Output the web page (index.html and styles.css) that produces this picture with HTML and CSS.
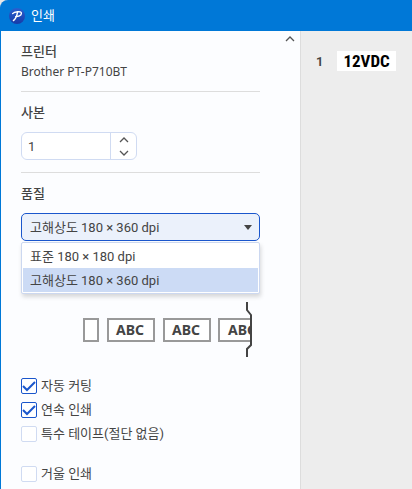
FILE: index.html
```html
<!DOCTYPE html>
<html lang="ko">
<head>
    <meta charset="UTF-8">
    <meta name="viewport" content="width=device-width, initial-scale=1.0">
    <title>인쇄</title>
    <link rel="stylesheet" href="styles.css">
</head>
<body>

<div class="window">
    <header class="titlebar">
        <svg class="logo" width="16" height="16" viewBox="0 0 16 16" aria-hidden="true">
            <defs>
                <linearGradient id="logo-fill" x1="0" y1="0" x2="0" y2="1">
                    <stop offset="0" stop-color="#2a5fd0"/>
                    <stop offset="1" stop-color="#163aa8"/>
                </linearGradient>
            </defs>
            <circle cx="8" cy="8" r="8" fill="url(#logo-fill)"/>
            <path d="M3.6 5.6C5.2 3.8 12.4 2.6 12.4 5.2C12.4 7.6 9 8.8 6.6 8.6M8.4 4.8C7.8 8 6.4 11 4.4 12.6" fill="none" stroke="#fff" stroke-width="1.4" stroke-linecap="round"/>
        </svg>
        <h1>인쇄</h1>
    </header>

    <div class="content">
        <main class="settings">
            <button class="collapse" type="button" aria-label="접기">
                <svg width="10" height="6" viewBox="0 0 10 6"><path d="M1 5L5 1L9 5" fill="none" stroke="#555" stroke-width="1.3"/></svg>
            </button>

            <section class="group">
                <h2>프린터</h2>
                <p>Brother PT-P710BT</p>
            </section>

            <section class="group copies">
                <h2><label for="copies">사본</label></h2>
                <div class="spinner">
                    <input type="text" id="copies" value="1" inputmode="numeric">
                    <div class="spinner-buttons">
                        <button type="button" aria-label="늘리기">
                            <svg width="10" height="6" viewBox="0 0 10 6"><path d="M1 5L5 1L9 5" fill="none" stroke="#555" stroke-width="1.3"/></svg>
                        </button>
                        <button type="button" aria-label="줄이기">
                            <svg width="10" height="6" viewBox="0 0 10 6"><path d="M1 1L5 5L9 1" fill="none" stroke="#555" stroke-width="1.3"/></svg>
                        </button>
                    </div>
                </div>
            </section>

            <section class="group">
                <h2><label for="quality">품질</label></h2>
                <div class="dropdown">
                    <select id="quality">
                        <option>표준 180 × 180 dpi</option>
                        <option selected>고해상도 180 × 360 dpi</option>
                    </select>
                    <svg class="arrow" width="8" height="5" viewBox="0 0 8 5" aria-hidden="true"><path d="M0 0H8L4 5Z" fill="#444"/></svg>
                    <ul class="menu">
                        <li>표준 180 × 180 dpi</li>
                        <li class="active">고해상도 180 × 360 dpi</li>
                    </ul>
                </div>

                <svg class="tape" width="239" height="56" viewBox="0 0 239 56" aria-hidden="true">
                    <defs>
                        <clipPath id="cut"><rect x="0" y="0" width="230" height="56"/></clipPath>
                    </defs>
                    <g clip-path="url(#cut)">
                        <g fill="#fff" stroke="#999" stroke-width="2">
                            <rect x="63" y="17" width="14" height="22"/>
                            <rect x="87" y="17" width="46" height="22"/>
                            <rect x="143" y="17" width="46" height="22"/>
                            <rect x="198" y="17" width="46" height="22"/>
                        </g>
                        <g class="tape-text">
                            <text x="95" y="33">ABC</text>
                            <text x="151" y="33">ABC</text>
                            <text x="207" y="33">ABC</text>
                        </g>
                    </g>
                    <path d="M226 0V8L230 13V43L226 47V55" fill="none" stroke="#444" stroke-width="2"/>
                </svg>

                <div class="options">
                    <label><input type="checkbox" checked>자동 커팅</label>
                    <label><input type="checkbox" checked>연속 인쇄</label>
                    <label><input type="checkbox">특수 테이프(절단 없음)</label>
                    <label class="mirror"><input type="checkbox">거울 인쇄</label>
                </div>
            </section>
        </main>

        <aside class="preview">
            <span class="page">1</span>
            <span class="label">12VDC</span>
        </aside>
    </div>
</div>

</body>
</html>
```
FILE: styles.css
```css
* {
    box-sizing: border-box;
}
body {
    margin: 0;
    background-color: #e8e8e8;
    color: #444;
    font-family: Roboto, "Noto Sans CJK KR", sans-serif;
    font-size: 13px;
    line-height: 20px;
}
h1, h2, p, ul {
    margin: 0;
    padding: 0;
}
button {
    display: flex;
    padding: 0;
    border: none;
    background: none;
    cursor: pointer;
}
.window {
    display: flex;
    flex-direction: column;
    height: 100vh;
    overflow: hidden;
    border-left: 1px solid #0078d7;
    border-top-left-radius: 8px;
    background-color: #0078d7;
}
.titlebar {
    display: flex;
    align-items: center;
    gap: 6px;
    height: 31px;
    flex-shrink: 0;
    padding-left: 8px;
}
.titlebar h1 {
    color: #fff;
    font-size: 13px;
    font-weight: normal;
}
.content {
    display: flex;
    flex: 1;
    min-height: 0;
}
.settings {
    position: relative;
    flex: 0 0 300px;
    overflow: hidden;
    padding: 0 40px 0 20px;
    border-right: 1px solid #ddd;
    background-color: #fcfdff;
}
.collapse {
    position: absolute;
    top: 5px;
    right: 5px;
}
.group {
    padding: 11px 0 9px;
}
.group + .group {
    border-top: 1px solid #ddd;
}
.group h2 {
    font-size: 13px;
    font-weight: 500;
}
.group p {
    font-family: "Noto Sans", sans-serif;
    font-size: 12px;
}
.group.copies {
    padding-bottom: 12px;
}
.spinner {
    display: flex;
    width: 116px;
    height: 28px;
    margin-top: 9px;
    overflow: hidden;
    border: 1px solid #d0dbf2;
    border-radius: 6px;
    background-color: #fff;
}
.spinner input {
    flex: 1;
    min-width: 0;
    padding: 1px 6px 0;
    border: none;
    border-right: 1px solid #d0dbf2;
    outline: none;
    background: none;
    color: #444;
    font: inherit;
}
.spinner-buttons {
    display: flex;
    flex-direction: column;
    width: 25px;
}
.spinner-buttons button {
    flex: 1;
    align-items: center;
    justify-content: center;
}
.dropdown {
    position: relative;
    margin-top: 9px;
}
.dropdown select {
    display: block;
    width: 100%;
    height: 28px;
    padding: 2px 24px 0 8px;
    appearance: none;
    border: 1px solid #1a56cc;
    border-radius: 5px;
    outline: none;
    background-color: #ebf1fb;
    color: #444;
    font: inherit;
}
.arrow {
    position: absolute;
    top: 12px;
    right: 8px;
    pointer-events: none;
}
.menu {
    position: absolute;
    top: 29px;
    left: 0;
    right: 0;
    padding: 1px;
    border: 1px solid #ccd8f0;
    border-radius: 2px;
    background-color: #fff;
    box-shadow: 1px 3px 4px rgba(0, 0, 0, 0.15);
    list-style: none;
}
.menu li {
    padding: 3px 7px 1px;
}
.menu .active {
    background-color: #ccdbf5;
}
.tape {
    display: block;
    width: 100%;
    margin-top: 61px;
}
.tape-text {
    fill: #444;
    font-family: "Noto Sans", sans-serif;
    font-size: 14px;
    font-weight: bold;
}
.options {
    display: flex;
    flex-direction: column;
    gap: 4px;
    margin-top: 18px;
}
.options label {
    display: flex;
    align-items: center;
    gap: 4px;
}
.options .mirror {
    margin-top: 16px;
}
.options input {
    width: 16px;
    height: 16px;
    margin: 0;
    appearance: none;
    border: 1px solid #d0dbf2;
    border-radius: 2px;
    background-color: #fff;
}
.options input:checked {
    border-color: #1a56cc;
    background-image: url("data:image/svg+xml,%3Csvg xmlns='http://www.w3.org/2000/svg' viewBox='0 0 14 14'%3E%3Cpath d='M1 7L5 11L13 3' fill='none' stroke='%231a56cc' stroke-width='2'/%3E%3C/svg%3E");
}
.preview {
    display: flex;
    flex: 1;
    align-items: flex-start;
    gap: 14px;
    padding: 20px 15px;
    background-color: #ededed;
}
.page {
    line-height: 22px;
    font-weight: 600;
}
.label {
    padding: 0 6px;
    background-color: #fff;
    color: #000;
    font-family: "Roboto Condensed", Roboto, sans-serif;
    font-size: 17px;
    font-weight: bold;
}
```
